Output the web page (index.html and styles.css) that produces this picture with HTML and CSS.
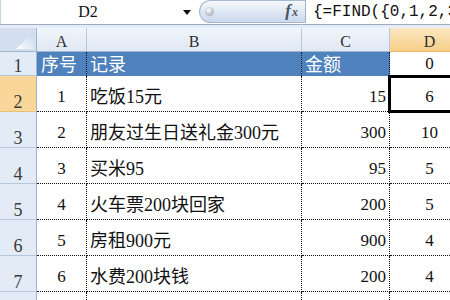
FILE: index.html
```html
<!DOCTYPE html>
<html>
<head>
<meta charset="utf-8">
<link rel="stylesheet" href="styles.css">
</head>
<body>
<div class="app">
  <div class="fbar">
    <div class="namebox"><span class="ref">D2</span><span class="caret"></span></div>
    <div class="pill"><span class="knob"></span><span class="fx"><i>f</i><i class="x">x</i></span></div>
    <div class="formula">{=FIND({0,1,2,3,4,5,6,7,8,9},B2)}</div>
  </div>
  <div class="gap"></div>
  <div class="sheet">
    <div class="corner"><svg width="18" height="17" viewBox="0 0 18 17"><defs><linearGradient id="tg" x1="0" y1="1" x2="1" y2="0"><stop offset="0" stop-color="#ffffff"/><stop offset="1" stop-color="#c6d6ea"/></linearGradient></defs><polygon points="18,0 18,17 0,17" fill="url(#tg)"/></svg></div>
    <div class="ch">A</div>
    <div class="ch">B</div>
    <div class="ch">C</div>
    <div class="ch sel">D</div>

    <div class="rh">1</div>
    <div class="c hd">序号</div>
    <div class="c hd">记录</div>
    <div class="c hd">金额</div>
    <div class="c d1 n mid">0</div>

    <div class="rh rsel">2</div>
    <div class="c n mid">1</div>
    <div class="c txt">吃饭15元</div>
    <div class="c n right">15</div>
    <div class="c n mid active">6</div>

    <div class="rh">3</div>
    <div class="c n mid">2</div>
    <div class="c txt">朋友过生日送礼金300元</div>
    <div class="c n right">300</div>
    <div class="c n mid">10</div>

    <div class="rh">4</div>
    <div class="c n mid">3</div>
    <div class="c txt">买米95</div>
    <div class="c n right">95</div>
    <div class="c n mid">5</div>

    <div class="rh">5</div>
    <div class="c n mid">4</div>
    <div class="c txt">火车票200块回家</div>
    <div class="c n right">200</div>
    <div class="c n mid">5</div>

    <div class="rh">6</div>
    <div class="c n mid">5</div>
    <div class="c txt">房租900元</div>
    <div class="c n right">900</div>
    <div class="c n mid">4</div>

    <div class="rh">7</div>
    <div class="c n mid">6</div>
    <div class="c txt">水费200块钱</div>
    <div class="c n right">200</div>
    <div class="c n mid">4</div>

    <div class="rh"></div>
    <div class="c"></div>
    <div class="c"></div>
    <div class="c"></div>
    <div class="c"></div>
  </div>
</div>
</body>
</html>
```
FILE: styles.css
```css
html, body {
  margin: 0;
  padding: 0;
  background: #ffffff;
}
body {
  width: 450px;
  height: 300px;
  overflow: hidden;
  font-family: "Liberation Serif", "Noto Sans CJK SC", serif;
  color: #111;
}
.app {
  width: 450px;
}
.fbar {
  display: flex;
  height: 24px;
  border-bottom: 1px solid #9aabc2;
  border-left: 1px solid #c5d5ea;
  box-sizing: content-box;
  background: #ffffff;
}
.namebox {
  display: flex;
  align-items: center;
  width: 198px;
}
.ref {
  width: 174px;
  text-align: center;
  font-size: 16px;
  line-height: 16px;
  color: #111;
}
.caret {
  width: 0;
  height: 0;
  margin-left: 8px;
  border-left: 4.5px solid transparent;
  border-right: 4.5px solid transparent;
  border-top: 5px solid #111;
}
.pill {
  width: 107px;
  height: 23px;
  box-sizing: border-box;
  border: 1px solid #a6b8d2;
  border-right: 1px solid #9fb0c8;
  border-radius: 12px 0 0 12px;
  background: linear-gradient(#f6f9fd, #dde7f4 55%, #c9d8ec);
  display: flex;
  align-items: center;
  justify-content: space-between;
  padding: 0 7px 0 5px;
}
.knob {
  width: 9px;
  height: 9px;
  border-radius: 50%;
  background: radial-gradient(circle at 40% 35%, #ffffff, #b9bfc8 60%, #8c94a0);
}
.fx {
  font-family: "Liberation Serif", serif;
  font-weight: bold;
  color: #4b5563;
  line-height: 16px;
}
.fx i {
  font-size: 17px;
}
.fx .x {
  font-size: 12px;
  margin-left: 1px;
}
.formula {
  flex: 1;
  display: flex;
  align-items: center;
  padding-left: 7px;
  font-family: "Liberation Mono", monospace;
  font-size: 16px;
  white-space: nowrap;
  overflow: hidden;
  color: #111;
}
.gap {
  height: 3px;
  background: #e6edf6;
}
.sheet {
  display: grid;
  grid-template-columns: 37px 50px 215px 88px 80px;
  grid-template-rows: 24px 24px repeat(6, 36px) 36px;
  width: 470px;
}
.sheet > div {
  box-sizing: border-box;
  display: flex;
  white-space: nowrap;
  overflow: visible;
}
.corner {
  background: #d3dfee;
  border-right: 1px solid #9eb6ce;
  border-bottom: 1px solid #9eb6ce;
  align-items: flex-end;
  justify-content: flex-end;
  padding: 0 2px 2px 0;
}
.ch {
  background: linear-gradient(#f1f5fb, #dfe8f4);
  border-right: 1px solid #b6c8dd;
  border-bottom: 1px solid #9eb6ce;
  justify-content: center;
  align-items: flex-end;
  font-size: 16px;
  line-height: 16px;
  padding-bottom: 1px;
  color: #2e2e2e;
}
.ch.sel {
  background: linear-gradient(#fce7c2, #f8cf88);
  border-bottom: 1px solid #f0b862;
}
.rh {
  background: #e3ebf6;
  border-right: 1px solid #9eb6ce;
  border-bottom: 1px solid #b6c8dd;
  justify-content: center;
  align-items: flex-end;
  font-size: 18px;
  line-height: 18px;
  color: #3b3b3b;
}
.rh.rsel {
  background: #f9d69a;
  border-bottom: 1px solid #e9c07a;
}
.c {
  border-right: 1px dotted #111;
  border-bottom: 1px dotted #111;
  align-items: flex-end;
  font-size: 18px;
  line-height: 18px;
  padding: 0 3px 5px 3px;
}
.c.hd {
  background: #4f81bd;
  color: #ffffff;
  border-bottom: none;
  padding-bottom: 2px;
  padding-left: 4px;
}
.c.hd + .c.hd {
  padding-left: 3px;
}
.c.d1 {
  border-bottom: none;
  padding-bottom: 3px;
}
.n {
  font-size: 17px;
}
.mid {
  justify-content: center;
}
.right {
  justify-content: flex-end;
}
.active {
  position: relative;
}
.active::after {
  content: "";
  position: absolute;
  top: -1px;
  left: -2px;
  right: -2px;
  bottom: -2px;
  border: 3px solid #000;
  box-sizing: border-box;
}
```
